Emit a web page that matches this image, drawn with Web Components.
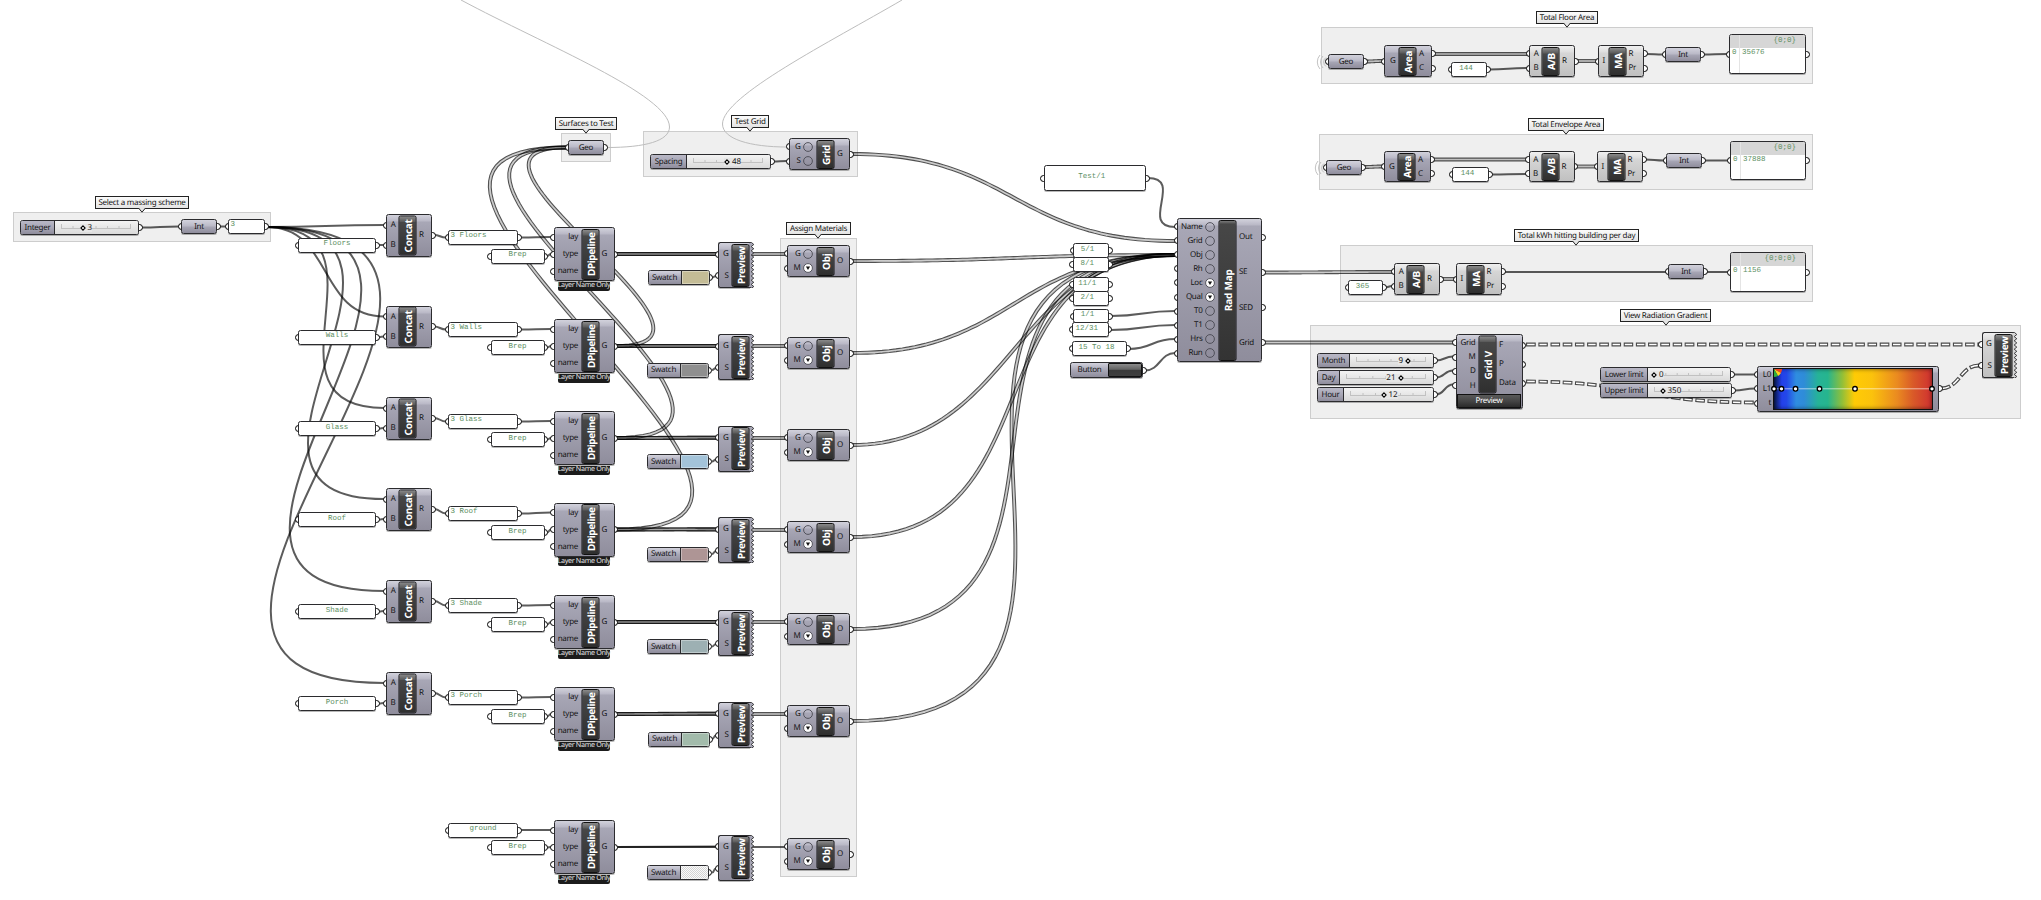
<!DOCTYPE html>
<html lang="en">
<head>
<meta charset="utf-8">
<title>Radiation study definition</title>
<style>
  body {
    margin: 0;
    background: #fff;
    font-family: "Noto Sans", "Open Sans", sans-serif;
    text-rendering: geometricPrecision;
  }
</style>
</head>
<body>
<gh-canvas>
  <gh-group style="--x:13;--y:212;--w:258;--h:30">Select a massing scheme</gh-group>
  <gh-group style="--x:561;--y:133;--w:50;--h:29">Surfaces to Test</gh-group>
  <gh-group style="--x:643;--y:131;--w:214.5;--h:46">Test Grid</gh-group>
  <gh-group style="--x:780;--y:238;--w:77;--h:639">Assign Materials</gh-group>
  <gh-group style="--x:1321;--y:27;--w:492;--h:57">Total Floor Area</gh-group>
  <gh-group style="--x:1319;--y:134;--w:494;--h:56">Total Envelope Area</gh-group>
  <gh-group style="--x:1340;--y:245;--w:473;--h:57">Total kWh hitting building per day</gh-group>
  <gh-group style="--x:1310;--y:325;--w:711;--h:94">View Radiation Gradient</gh-group>

  <gh-wires></gh-wires>

  <gh-slider label="Integer" lw="34" at="27.5" value="3" style="--x:20;--y:220;--w:119;--h:15"></gh-slider>
  <gh-param in out style="--x:181;--y:219;--w:36;--h:15">Int</gh-param>
  <gh-panel in out top style="--x:228;--y:219;--w:37;--h:15">3</gh-panel>

  <gh-param in out style="--x:568;--y:140;--w:36;--h:15">Geo</gh-param>
  <gh-slider label="Spacing" lw="36" at="40" value="48" style="--x:650;--y:154;--w:121;--h:15"></gh-slider>
  <gh-node name="Grid" in="G:o S:o" out="G" style="--x:789;--y:138;--w:61;--h:32"></gh-node>

  <gh-panel in out style="--x:1043.5;--y:165;--w:102.5;--h:26;--shift:-6px">Test/1</gh-panel>
  <gh-panel in out style="--x:1073;--y:243;--w:36;--h:15;--shift:-7px">5/1</gh-panel>
  <gh-panel in out style="--x:1072.5;--y:257;--w:36.5;--h:15;--shift:-7px">8/1</gh-panel>
  <gh-panel in out style="--x:1072.5;--y:277;--w:36.5;--h:15;--shift:-7px">11/1</gh-panel>
  <gh-panel in out style="--x:1072.5;--y:291;--w:36.5;--h:15;--shift:-7px">2/1</gh-panel>
  <gh-panel in out style="--x:1073;--y:309;--w:36;--h:14;--shift:-7px">1/1</gh-panel>
  <gh-panel in out style="--x:1072;--y:322;--w:36.5;--h:15;--shift:-7px">12/31</gh-panel>
  <gh-panel in out style="--x:1072;--y:341;--w:55;--h:15;--shift:-6px">15 To 18</gh-panel>
  <gh-button style="--x:1070;--y:362;--w:73;--h:16">Button</gh-button>
  <gh-node name="Rad Map" in="Name:o Grid:o Obj:o Rh:o Loc:v Qual:v T0:o T1:o Hrs:o Run:o" out="Out SE SED Grid" style="--x:1177;--y:218;--w:85;--h:144;--ow:25.5px"></gh-node>

  <gh-param in out waves style="--x:1328;--y:54;--w:36;--h:15">Geo</gh-param>
  <gh-node name="Area" in="G" out="A C" style="--x:1384;--y:45;--w:48;--h:32"></gh-node>
  <gh-panel in out style="--x:1451;--y:62;--w:36;--h:15;--shift:-6px">144</gh-panel>
  <gh-node grey name="A/B" in="A B" out="R" style="--x:1529;--y:45;--w:46;--h:32"></gh-node>
  <gh-node grey name="MA" in="I" out="R Pr" style="--x:1598;--y:45;--w:46;--h:32;--ow:18px"></gh-node>
  <gh-param in out style="--x:1665;--y:47;--w:36;--h:15">Int</gh-param>
  <gh-output path="{0;0}" style="--x:1729;--y:34;--w:77;--h:40">35676</gh-output>

  <gh-param in out waves style="--x:1326;--y:160;--w:36;--h:15">Geo</gh-param>
  <gh-node name="Area" in="G" out="A C" style="--x:1384;--y:151;--w:47;--h:31"></gh-node>
  <gh-panel in out style="--x:1452;--y:167;--w:37;--h:15;--shift:-6px">144</gh-panel>
  <gh-node grey name="A/B" in="A B" out="R" style="--x:1528.5;--y:151;--w:46;--h:31"></gh-node>
  <gh-node grey name="MA" in="I" out="R Pr" style="--x:1597;--y:151;--w:46;--h:31;--ow:18px"></gh-node>
  <gh-param in out style="--x:1666;--y:153;--w:36;--h:15">Int</gh-param>
  <gh-output path="{0;0}" style="--x:1730;--y:141;--w:76;--h:39">37888</gh-output>

  <gh-panel in out style="--x:1348;--y:280;--w:35;--h:15;--shift:-6px">365</gh-panel>
  <gh-node grey name="A/B" in="A B" out="R" style="--x:1394;--y:263;--w:46;--h:32"></gh-node>
  <gh-node grey name="MA" in="I" out="R Pr" style="--x:1456;--y:263;--w:46;--h:32;--ow:18px"></gh-node>
  <gh-param in out style="--x:1668;--y:264;--w:36;--h:15">Int</gh-param>
  <gh-output path="{0;0;0}" style="--x:1730;--y:252;--w:76;--h:40">1156</gh-output>

  <gh-slider label="Month" lw="32" at="57" before value="9" style="--x:1317;--y:353;--w:117;--h:15"></gh-slider>
  <gh-slider label="Day" lw="22" at="59.5" before value="21" style="--x:1317;--y:370;--w:117;--h:15"></gh-slider>
  <gh-slider label="Hour" lw="26" at="39.5" value="12" style="--x:1317;--y:387;--w:117;--h:15"></gh-slider>
  <gh-node name="Grid V" in="Grid M D H" out="F P Data" button="Preview" style="--x:1455.5;--y:334;--w:67;--h:75;--ow:26px"></gh-node>
  <gh-slider label="Lower limit" lw="47" at="6" value="0" style="--x:1600;--y:367;--w:131;--h:15"></gh-slider>
  <gh-slider label="Upper limit" lw="47" at="14.5" value="350" style="--x:1600;--y:383;--w:132;--h:15"></gh-slider>
  <gh-gradient style="--x:1757;--y:366;--w:182;--h:46"></gh-gradient>
  <gh-node grey jagged name="Preview" in="G S" style="--x:1981.5;--y:332;--w:34.5;--h:46"></gh-node>
</gh-canvas>

<script>
const base = `
  <style>
    :host {
      position: absolute;
      left: calc(var(--x) * 1px);
      top: calc(var(--y) * 1px);
      width: calc(var(--w) * 1px);
      height: calc(var(--h) * 1px);
      box-sizing: border-box;
      isolation: isolate;
      font-size: 8px;
      letter-spacing: -.28px;
      line-height: 1;
      color: #161616;
      white-space: nowrap;
      --top: #d2d2dc;
      --top2: #b9b8c6;
      --mid: #a8a7b6;
      --low: #8f8d9c;
    }
    :host([grey]) {
      --top: #f0f0f0;
      --top2: #dedede;
      --mid: #d6d6d6;
      --low: #c0c0c0;
    }
    * { box-sizing: border-box; }
    .body {
      height: 100%;
      border: 1px solid #2b2b2e;
      border-radius: 2.5px;
      overflow: hidden;
      box-shadow: 0 1px 0 rgba(0, 0, 0, .28);
    }
    .grip {
      position: absolute;
      z-index: -1;
      top: calc(50% - 3.5px);
      width: 7px;
      height: 7px;
      border: 1.5px solid #000;
      border-radius: 50%;
      background: #fff;
    }
    .grip.in { left: -3.5px; }
    .grip.out { right: -3.5px; }
  </style>
`;

class GhElement extends HTMLElement {
  constructor() {
    super();
    this.attachShadow({ mode: "open" });
  }

  connectedCallback() {
    this.shadowRoot.innerHTML = base + this.render();
  }

  grips(left = this.hasAttribute("in"), right = this.hasAttribute("out")) {
    return (left ? `<i class="grip in"></i>` : "") + (right ? `<i class="grip out"></i>` : "");
  }
}

class GhGroup extends GhElement {
  render() {
    return `
      <style>
        :host {
          display: flex;
          justify-content: center;
          align-items: flex-start;
          border: 1.5px solid #cdcdcd;
          background: #efefef;
        }
        .tag {
          position: relative;
          display: flex;
          align-items: center;
          flex: none;
          height: 13px;
          margin-top: -17px;
          padding: 0 2.5px;
          border: 1px solid #222;
          border-right-width: 1.5px;
          border-bottom-width: 1.5px;
          background: linear-gradient(#fbfbfb, #e4e4e4);
        }
        svg {
          position: absolute;
          left: calc(50% - 4px);
          top: 11px;
        }
      </style>
      <div class="tag"><slot></slot>
        <svg width="8" height="6"><path d="M.5 0 4 4.2 7.5 0" fill="#e4e4e4" stroke="#222"/></svg>
      </div>`;
  }
}

class GhParam extends GhElement {
  render() {
    const waves = this.hasAttribute("waves")
      ? `<svg width="12" height="16"><g fill="none" stroke="#bbb" stroke-width=".9">
          <path d="M10 3.5a5.5 5.5 0 0 0 0 9M7 2a8.5 8.5 0 0 0 0 12M4 1a10.5 10.5 0 0 0 0 14"/></g></svg>`
      : "";
    return `
      <style>
        .body {
          display: flex;
          align-items: center;
          justify-content: center;
          background: linear-gradient(var(--top), var(--top2) 48%, var(--mid) 52%, var(--low));
        }
        svg { position: absolute; left: -12px; top: 0; z-index: -2; }
      </style>
      ${waves}${this.grips()}
      <div class="body"><slot></slot></div>`;
  }
}

class GhPanel extends GhElement {
  render() {
    return `
      <style>
        .body {
          display: flex;
          align-items: center;
          justify-content: center;
          padding-right: calc(var(--shift, 0px) * -1);
          background: #fff;
          font: 7.5px/1 "Liberation Mono", monospace;
          letter-spacing: 0;
          color: #5d8f63;
        }
        :host([top]) .body {
          align-items: flex-start;
          justify-content: flex-start;
          padding: 1.5px 0 0 1.5px;
        }
      </style>
      ${this.grips()}
      <div class="body"><slot></slot></div>`;
  }
}

class GhOutput extends GhElement {
  render() {
    return `
      <style>
        .body {
          display: grid;
          grid-template: 13px 1fr / 10px 1fr;
          background: #fff;
          font: 7.5px/1 "Liberation Mono", monospace;
          letter-spacing: 0;
          color: #5d8f63;
        }
        .head { background: #d6d6d6; }
        .path { text-align: right; padding: 3px 9px 0 0; }
        .i { border-right: 1px solid #e4e4e4; }
        .row { padding: 2px 0 0 2px; }
      </style>
      ${this.grips(true, true)}
      <div class="body">
        <div class="head i"></div><div class="head path">${this.getAttribute("path")}</div>
        <div class="row i">0</div><div class="row"><slot></slot></div>
      </div>`;
  }
}

class GhSlider extends GhElement {
  render() {
    const at = Number(this.getAttribute("at"));
    const before = this.hasAttribute("before");
    const width = parseFloat(this.style.getPropertyValue("--w")) - this.getAttribute("lw") - 15;
    const ticks = [0, 1, 2, 3, 4, 5, 6]
      .map((n) => `M${(0.5 + (n * (width - 1)) / 6).toFixed(1)} 4V${n % 6 ? 2 : 0}`)
      .join("");
    const value = `<span>${this.getAttribute("value")}</span>`;
    const knob = `<svg class="knob" width="6" height="6"><path d="M3 .9 5.1 3 3 5.1.9 3z" fill="#fff" stroke="#000" stroke-width="1.1"/></svg>`;
    return `
      <style>
        .body {
          display: grid;
          grid-template-columns: ${this.getAttribute("lw")}px 1fr;
          background: #e2e2e2;
        }
        .label {
          display: flex;
          align-items: center;
          justify-content: center;
          border-right: 1px solid #2b2b2e;
          background: linear-gradient(var(--top2), var(--mid) 50%, var(--low));
        }
        .track {
          position: relative;
          display: flex;
          align-items: center;
          background: linear-gradient(#f3f3f3, #dadada);
        }
        .ticks { position: absolute; left: 6px; top: 3px; }
        .at {
          position: relative;
          display: flex;
          align-items: center;
          gap: 2px;
          letter-spacing: 0;
          ${before ? `margin-left: auto; margin-right: ${width + 13 - at - 4}px;` : `margin-left: ${at - 3}px;`}
          background: #e6e6e6;
        }
      </style>
      ${this.grips(false, true)}
      <div class="body">
        <div class="label">${this.getAttribute("label")}</div>
        <div class="track">
          <svg class="ticks" width="${width}" height="5"><path d="${ticks}M0 4.5H${width}" fill="none" stroke="#b8b8b8" stroke-width=".8"/></svg>
          <div class="at">${before ? value + knob : knob + value}</div>
        </div>
      </div>`;
  }
}

class GhSwatch extends GhElement {
  render() {
    return `
      <style>
        .body {
          display: grid;
          grid-template-columns: 33px 1fr;
        }
        .label {
          display: flex;
          align-items: center;
          justify-content: center;
          border-right: 1px solid #2b2b2e;
          background: linear-gradient(var(--top), var(--top2) 30%, var(--mid) 50%, var(--low));
        }
        .color {
          background: ${this.getAttribute("color")};
          box-shadow: inset 0 0 0 1px rgba(255, 255, 255, .35);
        }
      </style>
      ${this.grips(false, true)}
      <div class="body"><div class="label">Swatch</div><div class="color"></div></div>`;
  }
}

class GhButton extends GhElement {
  render() {
    return `
      <style>
        .body {
          display: grid;
          grid-template-columns: 1fr 34px;
          background: linear-gradient(var(--top), var(--top2) 30%, var(--mid) 50%, var(--low));
        }
        .label { display: flex; align-items: center; justify-content: center; }
        .push {
          border: 1px solid #111;
          border-radius: 1px;
          background: linear-gradient(#8b8b8b, #636363 45%, #3a3a3a 50%, #3f3f3f);
        }
      </style>
      ${this.grips(false, true)}
      <div class="body"><div class="label"><slot></slot></div><div class="push"></div></div>`;
  }
}

class GhNode extends GhElement {
  ports(side) {
    const list = (this.getAttribute(side) || "").split(" ").filter(Boolean);
    return list.map((port) => {
      const [name, mark] = port.split(":");
      const ring = mark
        ? `<svg width="10" height="10"><circle cx="5" cy="5" r="4.4" fill="${mark === "v" ? "#fff" : "none"}" stroke="#4a4a52" stroke-width=".9"/>
            ${mark === "v" ? `<path d="M2.9 3.5h4.2L5 7z" fill="#111"/>` : ""}</svg>`
        : "";
      return `<div class="port"><i class="grip ${side}"></i><span>${name}</span>${ring}</div>`;
    }).join("");
  }

  jagged() {
    if (!this.hasAttribute("jagged")) return "";
    const h = parseFloat(this.style.getPropertyValue("--h"));
    let d = "M0 .5H2.5";
    for (let y = 2.5; y < h - 1; y += 4.2) d += `L4.8 ${y}L2.2 ${y + 2.1}`;
    return `<svg class="jag" width="6" height="${h}"><path d="${d}L2 ${h - .5}H0" fill="var(--mid)" stroke="#2b2b2e" stroke-width=".9"/></svg>`;
  }

  render() {
    const rings = /:/.test(this.getAttribute("in"));
    const button = this.getAttribute("button");
    const jagged = this.hasAttribute("jagged");
    const name = this.getAttribute("name");
    return `
      <style>
        .body {
          position: absolute;
          inset: 0;
          z-index: -1;
          ${jagged ? "right: 3px; border-right: 0; border-radius: 2.5px 0 0 2.5px;" : ""}
          background: linear-gradient(var(--top), var(--top2) 6px, var(--mid) 7px, var(--low));
        }
        .grip { z-index: -2; }
        .wrap {
          height: 100%;
          display: flex;
          flex-direction: column;
          padding: 1.5px 0;
        }
        .cols { flex: 1; display: flex; min-height: 0; }
        .side { display: flex; flex-direction: column; flex: 1; }
        .side.r { flex: 0 0 var(--ow, 15.5px); }
        :host([jagged]) .side.r { flex-basis: 3.5px; }
        .port {
          position: relative;
          flex: 1;
          display: flex;
          align-items: center;
          gap: 2.5px;
        }
        .l .port { justify-content: flex-end; padding-right: ${rings ? 4 : 3.5}px; }
        .r .port { padding-left: 2.5px; }
        .title {
          flex: none;
          width: 17.5px;
          display: flex;
          align-items: center;
          justify-content: center;
          writing-mode: vertical-rl;
          transform: rotate(180deg);
          overflow: hidden;
          border: 1px solid #111;
          border-radius: 2px;
          background: linear-gradient(to top, #8a8a8a, #5c5c5c 5px, #474747 6px, #2f2f2f);
          color: #fff;
          font-weight: 700;
          font-size: 10px;
          letter-spacing: ${name === "DPipeline" ? -.4 : -.25}px;
          ${name === "Rad Map" ? "background: linear-gradient(to top, #777, #5c5c5c 2px, #474747 3px, #333);" : ""}
        }
        .push {
          flex: none;
          height: 13.5px;
          margin: 1px 1.5px 0;
          display: flex;
          align-items: center;
          justify-content: center;
          border: 1px solid #111;
          background: linear-gradient(#5a5a5a, #454545 50%, #2b2b2b);
          color: #fff;
        }
        .foot {
          position: absolute;
          top: calc(100% + .5px);
          left: 4.5px;
          right: 4.5px;
          height: 9px;
          display: flex;
          align-items: center;
          justify-content: center;
          border-radius: 0 0 2px 2px;
          background: #1c1c1c;
          color: #e4e4e4;
          font-size: 7.2px;
          letter-spacing: -.35px;
        }
        .jag { position: absolute; right: -1.5px; top: 0; z-index: -1; }
      </style>
      <div class="body"></div>
      ${this.jagged()}
      <div class="wrap">
        <div class="cols">
          <div class="side l">${this.ports("in")}</div>
          <div class="title">${name}</div>
          <div class="side r">${this.ports("out")}</div>
        </div>
        ${button ? `<div class="push">${button}</div>` : ""}
      </div>
      ${this.hasAttribute("foot") ? `<div class="foot">${this.getAttribute("foot")}</div>` : ""}`;
  }
}

class GhGradient extends GhElement {
  render() {
    const stops = [0.5, 8, 22, 46, 81.5, 158.5];
    return `
      <style>
        .body {
          display: flex;
          padding: 1px 5px 1px 0;
          background: linear-gradient(var(--top), var(--top2) 5px, var(--mid) 6px, var(--low));
        }
        .ports { position: relative; width: 15px; display: flex; flex-direction: column; }
        .ports span { flex: 1; display: flex; align-items: center; justify-content: flex-end; padding-right: 2px; }
        .ramp {
          position: relative;
          flex: 1;
          border: 1px solid #111;
          background: linear-gradient(90deg, #0a1a50, #2340ea 5%, #2348e8 8%, #2f8de0 14%, #2f8cd8 19%, #26b397 28%, #26b58e 34%, #8fbf3a 43%, #ffcb05 51%, #fbc20c 62%, #ea8a20 78%, #d95a28 88%, #cf3030 100%);
          box-shadow: inset 0 0 4px rgba(0, 0, 0, .55);
        }
        svg { position: absolute; left: -5px; top: -1px; }
        .side { position: absolute; inset: 1.5px 0; z-index: -1; display: flex; flex-direction: column; }
        .side div { position: relative; flex: 1; }
      </style>
      <div class="side"><div><i class="grip in"></i></div><div>${this.grips(true, true)}</div><div><i class="grip in"></i></div></div>
      <div class="body">
        <div class="ports"><span>L0</span><span>L1</span><span>t</span></div>
        <div class="ramp">
          <svg width="172" height="44">
            <path d="M5 1h8a8 8 0 0 1-1.1 4z" fill="#f0441e"/>
            <path d="M5 1l6.9 4A8 8 0 0 1 9 7.9z" fill="#ffd21a"/>
            <path d="M5 1l4 6.9A8 8 0 0 1 5 9z" fill="#2fae3e"/>
            <path d="M5 20.8H163" stroke="#fff" stroke-opacity=".6"/>
            ${stops.map((x) => `<circle cx="${x + 4.5}" cy="20.8" r="2.3" fill="#fff" stroke="#000" stroke-width="1.3"/>`).join("")}
          </svg>
        </div>
      </div>`;
  }
}

// Top edge of every component in one layer row of the definition
const rows = [
  { layer: "Floors", concat: 214, text: 237.5, panel: 230, brep: 248.5, pipe: 227, preview: 242, swatch: 270, sx: 647.5, color: "#c4bc96", obj: 245 },
  { layer: "Walls", concat: 305.5, text: 329.5, panel: 322, brep: 340, pipe: 319, preview: 334, swatch: 362.5, sx: 646.5, color: "#8f8f8f", obj: 337 },
  { layer: "Glass", concat: 397, text: 421, panel: 414, brep: 432, pipe: 411, preview: 425.5, swatch: 454, sx: 646.5, color: "#a3c3d9", obj: 429 },
  { layer: "Roof", concat: 488, text: 512, panel: 506, brep: 525, pipe: 502.5, preview: 517, swatch: 546.5, sx: 646.5, color: "#ae9595", obj: 521 },
  { layer: "Shade", concat: 580, text: 604, panel: 598, brep: 617, pipe: 595, preview: 610, swatch: 639, sx: 646.5, color: "#9db0b3", obj: 613 },
  { layer: "Porch", concat: 672, text: 696, panel: 690, brep: 709, pipe: 687, preview: 701.5, swatch: 731.5, sx: 647.5, color: "#a2bbab", obj: 705 },
  { layer: "ground", panel: 822.5, brep: 840, pipe: 820, preview: 834.5, swatch: 865, sx: 646.5, color: "repeating-conic-gradient(#d4d4d4 0 25%, #fafafa 0 50%) 0 0 / 2px 2px", obj: 838 },
];

class GhWires extends HTMLElement {
  constructor() {
    super();
    this.attachShadow({ mode: "open" });
    this.shadowRoot.innerHTML = `
      <style>
        :host { position: absolute; inset: 0; }
        svg { display: block; }
        path { fill: none; }
        .one { stroke: rgba(0, 0, 0, .64); stroke-width: 2; }
        .rail { stroke: rgba(0, 0, 0, .68); stroke-width: 1.1; }
        .core { stroke: rgba(0, 0, 0, .2); stroke-width: 2; }
        .tree { stroke: #4a4a4a; stroke-width: 3.8; stroke-dasharray: 9.6 2.6; }
        .treein { stroke: #fff; stroke-width: 1.5; stroke-dasharray: 7.4 4.8; stroke-dashoffset: -1.1; }
        .faint { stroke: #bdbdbd; stroke-width: 1; }
      </style>
      <svg width="2041" height="900">${this.draw()}</svg>`;
  }

  handle(x1, y1, x2, y2) {
    return Math.max(Math.abs(x2 - x1) * 0.5, Math.abs(y2 - y1) * 0.74);
  }

  curve(x1, y1, x2, y2) {
    const c = this.handle(x1, y1, x2, y2);
    return `M${x1} ${y1}C${x1 + c} ${y1} ${x2 - c} ${y2} ${x2} ${y2}`;
  }

  // Parallel of the curve, shifted along its normal
  rail(x1, y1, x2, y2, shift) {
    const c = this.handle(x1, y1, x2, y2);
    const points = [];
    for (let n = 0; n <= 60; n++) {
      const t = n / 60;
      const u = 1 - t;
      const x = u * u * u * x1 + 3 * u * u * t * (x1 + c) + 3 * u * t * t * (x2 - c) + t * t * t * x2;
      const y = (u * u * u + 3 * u * u * t) * y1 + (3 * u * t * t + t * t * t) * y2;
      const dx = 3 * u * u * c + 6 * u * t * (x2 - x1 - 2 * c) + 3 * t * t * c;
      const dy = 6 * u * t * (y2 - y1);
      const len = Math.hypot(dx, dy) || 1;
      points.push(`${(x - (dy / len) * shift).toFixed(2)} ${(y + (dx / len) * shift).toFixed(2)}`);
    }
    return "M" + points.join("L");
  }

  one(...p) {
    return `<path class="one" d="${this.curve(...p)}"/>`;
  }

  list(...p) {
    return `<path class="core" d="${this.curve(...p)}"/>
      <path class="rail" d="${this.rail(...p, -1.4)}"/><path class="rail" d="${this.rail(...p, 1.4)}"/>`;
  }

  tree(...p) {
    const d = this.curve(...p);
    return `<path class="tree" d="${d}"/><path class="treein" d="${d}"/>`;
  }

  draw() {
    let out = `
      <path class="faint" d="M607 147.5C645 147.5 669.5 141 669.5 127C669.5 95 545 45 461 0"/>
      <path class="faint" d="M787 147C750 147 722.5 139 722.5 124C722.5 96 830 42 902 0"/>`;

    rows.forEach((row, n) => {
      const pipe = row.pipe + 27;
      const link = (...p) => (n === 6 ? this.one(...p) : this.list(...p));
      if (row.concat) {
        out += this.one(267, 227, 384, row.concat + 11);
        out += this.one(379, row.text + 7.5, 384, row.concat + 31);
        out += this.one(434, row.concat + 21, 446, row.panel + 7.5);
        out += this.list(852, row.obj + 16, 1175, 255);
      }
      out += this.one(521, row.panel + 7.5, 551, row.pipe + 10);
      out += this.one(547, row.brep + 7.5, 551, pipe);
      out += link(616, pipe, 716, row.preview + 12);
      out += link(616, pipe, 785, row.obj + 9);
      out += this.one(712, row.swatch + 7.5, 716, row.preview + 34);
    });
    rows.slice(1, 4).forEach((row) => {
      out += this.list(616, row.pipe + 27, 566, 147.5);
    });

    out += this.one(141, 227.5, 179, 226.5) + this.one(219, 226.5, 227, 226.5);
    out += this.one(773, 161.5, 787, 161);
    out += this.list(852, 154, 1175, 241);
    out += this.one(1148, 178, 1175, 227);
    out += this.one(1111, 316, 1175, 311) + this.one(1111, 330, 1175, 325);
    out += this.one(1129, 349, 1175, 339) + this.one(1145, 370.5, 1175, 353);
    out += this.list(1265, 272.5, 1392, 272) + this.list(1265, 342.5, 1453, 342.5);

    out += this.list(1366, 61.5, 1382, 61) + this.list(1434, 54, 1527, 54);
    out += this.one(1489, 69.5, 1527, 68) + this.list(1577, 61, 1596, 61);
    out += this.one(1646, 54, 1663, 54.5) + this.one(1703, 54.5, 1727, 54);
    out += this.list(1364, 167, 1382, 166.5) + this.list(1433, 159.5, 1526, 159.5);
    out += this.one(1491, 174.5, 1526, 174) + this.list(1577, 166.5, 1595, 166.5);
    out += this.one(1645, 159.5, 1664, 160.5) + this.one(1704, 160.5, 1728, 160.5);
    out += this.one(1385, 287.5, 1392, 286) + this.list(1442, 279, 1454, 279);
    out += this.one(1504, 272, 1666, 272) + this.one(1706, 272, 1728, 272);

    out += this.one(1436, 360.5, 1453, 356.5) + this.one(1436, 377.5, 1453, 370.5);
    out += this.one(1436, 394.5, 1453, 384.5);
    out += this.one(1733, 374.5, 1755, 374.5) + this.one(1734, 390.5, 1755, 388.5);
    out += this.tree(1526, 344.5, 1979, 344.5) + this.tree(1526, 381.5, 1755, 402.5);
    out += this.tree(1941, 388.5, 1979, 365.5);
    return out;
  }
}

class GhCanvas extends HTMLElement {
  constructor() {
    super();
    this.attachShadow({ mode: "open" });
    this.shadowRoot.innerHTML = `
      <style>
        :host {
          display: block;
          position: relative;
          width: 2041px;
          height: 900px;
          overflow: hidden;
          background: #fff;
        }
      </style>
      <slot></slot>`;
  }

  connectedCallback() {
    const box = (x, y, w, h) => `style="--x:${x};--y:${y};--w:${w};--h:${h}"`;
    this.insertAdjacentHTML("beforeend", rows.map((row) => `
      ${row.concat ? `
        <gh-panel in out ${box(298, row.text, 78, 15)}>${row.layer}</gh-panel>
        <gh-node name="Concat" in="A B" out="R" ${box(386, row.concat, 46, 42.5)}></gh-node>` : ""}
      <gh-panel in out ${row.concat ? "top" : ""} ${box(448, row.panel, 70, 15)}>${row.concat ? "3 " : ""}${row.layer}</gh-panel>
      <gh-panel in out ${box(490.5, row.brep, 54, 15)}>Brep</gh-panel>
      <gh-node name="DPipeline" foot="Layer Name Only" in="lay type name" out="G" ${box(553.5, row.pipe, 61, 54)}></gh-node>
      <gh-swatch color="${row.color}" ${box(row.sx, row.swatch, 62, 15)}></gh-swatch>
      <gh-node jagged name="Preview" in="G S" ${box(718, row.preview, 35, 46)}></gh-node>
      <gh-node name="Obj" in="G:o M:v" out="O" ${box(787, row.obj, 63, 32)}></gh-node>`).join(""));
  }
}

customElements.define("gh-group", GhGroup);
customElements.define("gh-param", GhParam);
customElements.define("gh-panel", GhPanel);
customElements.define("gh-output", GhOutput);
customElements.define("gh-slider", GhSlider);
customElements.define("gh-swatch", GhSwatch);
customElements.define("gh-button", GhButton);
customElements.define("gh-node", GhNode);
customElements.define("gh-gradient", GhGradient);
customElements.define("gh-wires", GhWires);
customElements.define("gh-canvas", GhCanvas);
</script>
</body>
</html>
